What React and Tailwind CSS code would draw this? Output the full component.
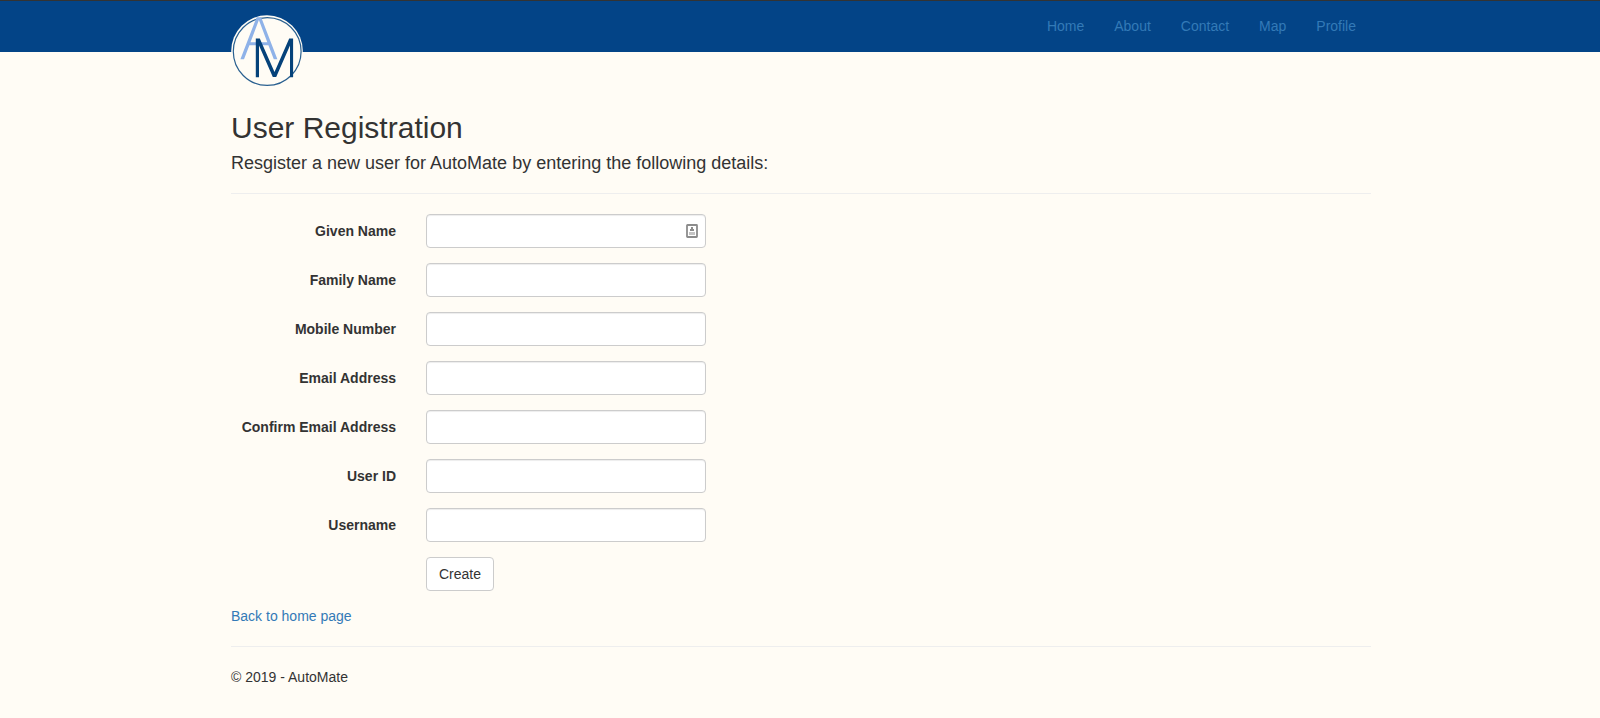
const navLinks = ["Home", "About", "Contact", "Map", "Profile"];

const fields = [
  "Given Name",
  "Family Name",
  "Mobile Number",
  "Email Address",
  "Confirm Email Address",
  "User ID",
  "Username",
];

function Logo() {
  return (
    <svg className="block h-[72px] w-[72px]" viewBox="0 0 72 72" fill="none" aria-label="AutoMate">
      <circle cx="36" cy="36" r="35.8" fill="#fffcf5" />
      <circle cx="36.2" cy="36.5" r="33.9" stroke="#2a6090" strokeWidth="1.2" />
      <path
        d="M9.4 44.3 L25.6 2.3 H30.2 L46.4 44.3 H42.8 L37.4 30.2 H18.4 L13 44.3 Z M19.5 27.3 H36.3 L27.9 5 Z"
        fill="#8fb2e8"
        fillRule="evenodd"
      />
      <path
        d="M24.8 62.3 V23.6 H28.8 L43.5 57 L58.2 23.6 H62.1 V62.3 H59 V30.5 L45.2 62 H41.8 L28 30.5 V62.3 Z"
        fill="#05427a"
      />
    </svg>
  );
}

function ContactIcon() {
  return (
    <svg className="block h-[14px] w-[12px]" viewBox="0 0 12 14" fill="none">
      <rect x="1" y="1" width="10" height="12" rx="0.5" stroke="#8c8c8c" strokeWidth="1.8" />
      <path d="M5 3h2v2h1v2H4V5h1z" fill="#8c8c8c" />
      <path d="M3 8h6v3H3z" fill="#c4c4c4" />
    </svg>
  );
}

function Field({ label, withIcon }) {
  return (
    <div className="mb-[15px] flex h-[34px]">
      <label className="w-[165px] shrink-0 whitespace-nowrap pt-[7px] text-right font-bold">{label}</label>
      <div className="relative ml-[30px] w-[280px]">
        <input
          type="text"
          aria-label={label}
          className="block h-[34px] w-full rounded-[4px] border border-[#ccc] bg-white px-3 shadow-[inset_0_1px_1px_rgba(0,0,0,0.075)] outline-none"
        />
        {withIcon && (
          <span className="absolute right-[8px] top-[10px]">
            <ContactIcon />
          </span>
        )}
      </div>
    </div>
  );
}

export default function App() {
  return (
    <div className="min-h-screen bg-[#fffcf5] font-['Liberation_Sans',Arial,sans-serif] text-[14px] leading-[20px] text-[#333]">
      <header className="h-[52px] border-t border-[#333] bg-[#034487]">
        <div className="ml-[231px] flex w-[1140px] items-start justify-between">
          <a href="#" className="pt-[14px]">
            <Logo />
          </a>
          <nav className="flex">
            {navLinks.map((name) => (
              <a key={name} href="#" className="p-[15px] text-[#337ab7]">
                {name}
              </a>
            ))}
          </nav>
        </div>
      </header>

      <main className="ml-[231px] w-[1140px] pt-[59px]">
        <h2 className="text-[30px] font-medium leading-[33px]">User Registration</h2>
        <h4 className="mt-[9px] text-[18px] font-medium leading-[20px]">
          Resgister a new user for AutoMate by entering the following details:
        </h4>
        <hr className="my-5 border-t border-[#eee]" />
        <form>
          {fields.map((label, i) => (
            <Field key={label} label={label} withIcon={i === 0} />
          ))}
          <div className="mb-[15px] ml-[195px] flex">
            <button type="button" className="h-[34px] rounded-[4px] border border-[#ccc] bg-white px-3">
              Create
            </button>
          </div>
        </form>
        <div>
          <a href="#" className="text-[#337ab7]">
            Back to home page
          </a>
        </div>
        <hr className="my-5 border-t border-[#eee]" />
        <footer>
          <p>© 2019 - AutoMate</p>
        </footer>
      </main>
    </div>
  );
}
